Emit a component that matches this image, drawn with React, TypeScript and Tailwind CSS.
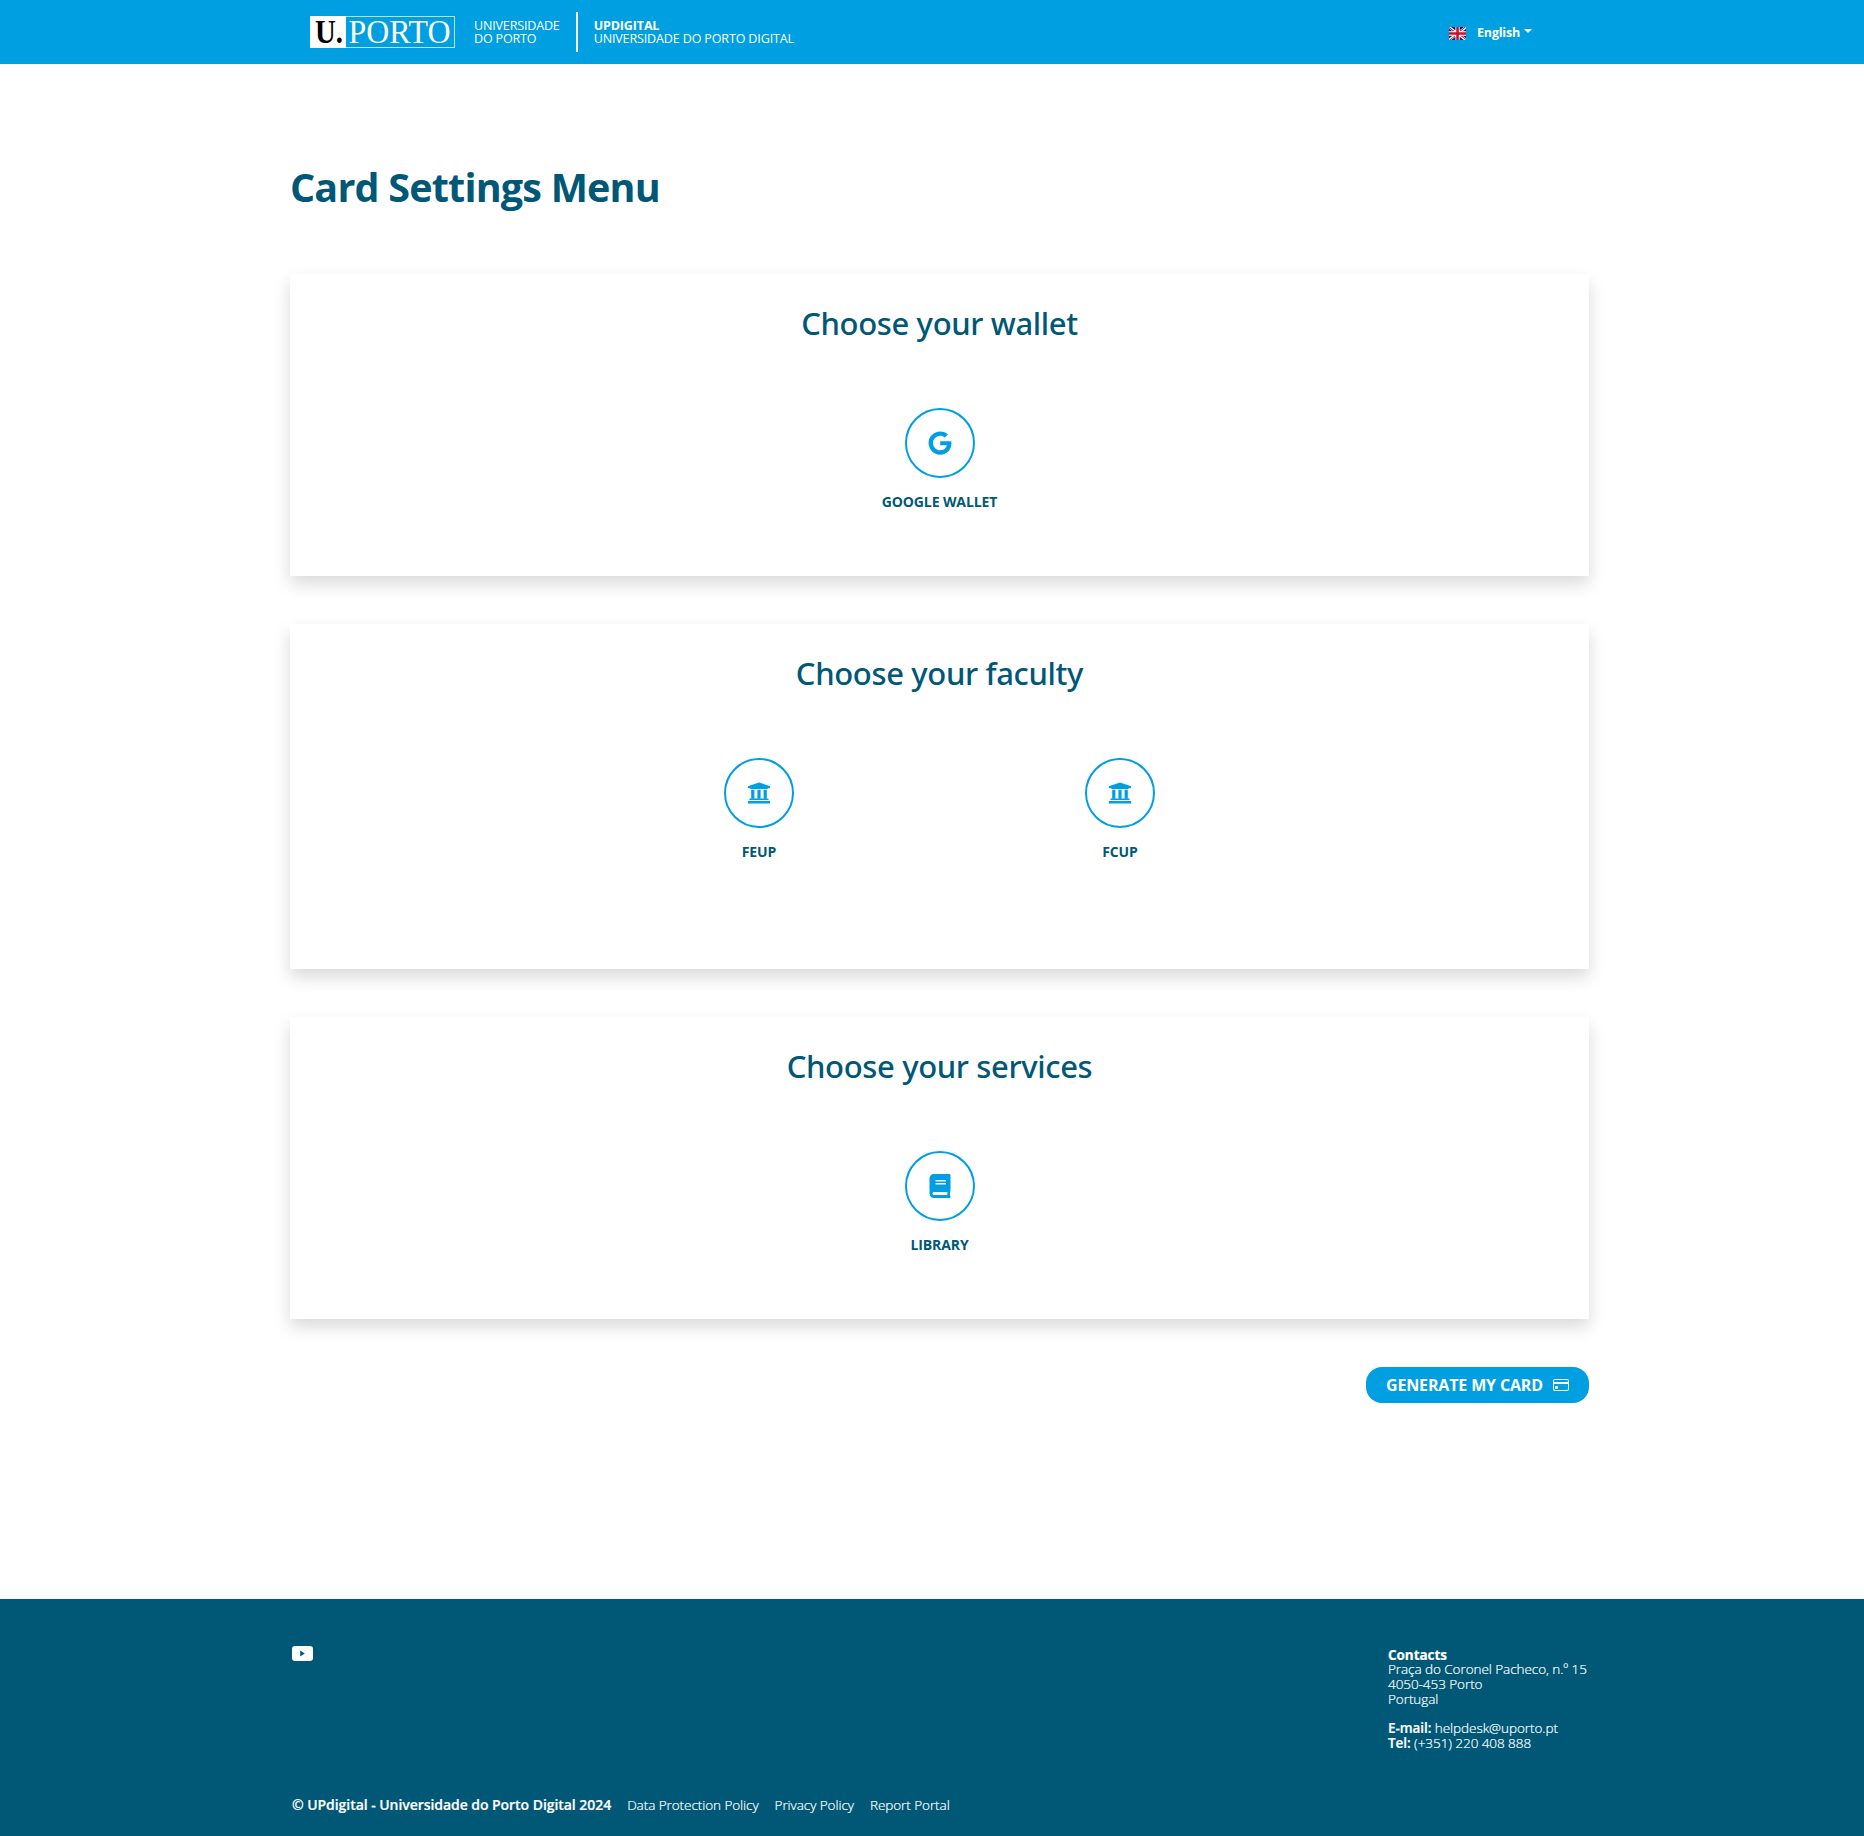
import type { ReactNode } from 'react';
import { FaGoogle, FaBook } from 'react-icons/fa';
import { BsCreditCard } from 'react-icons/bs';

function Logo() {
  return (
    <svg width="145" height="32" viewBox="0 0 145 32" className="block shrink-0 overflow-visible" aria-label="U.Porto">
      <rect x="0.5" y="0.5" width="144" height="31" fill="none" stroke="#b5e2f6" />
      <rect x="0" y="0" width="36" height="32" fill="#fff" />
      <text x="5" y="27" fontFamily="Liberation Serif, serif" fontWeight="700" fontSize="33" textLength="28" lengthAdjust="spacingAndGlyphs" fill="#000">U.</text>
      <text x="38.5" y="27" fontFamily="Liberation Serif, serif" fontSize="33" textLength="102" lengthAdjust="spacingAndGlyphs" fill="#fff">PORTO</text>
    </svg>
  );
}

function Flag() {
  return (
    <svg width="17" height="13" viewBox="0 0 640 480" preserveAspectRatio="none" className="block shrink-0">
      <path fill="#012169" d="M0 0h640v480H0z" />
      <path fill="#fff" d="m75 0 244 181L562 0h78v62L400 241l240 178v61h-80L320 301 81 480H0v-60l239-178L0 64V0z" />
      <path fill="#c8102e" d="m424 281 216 159v40L369 281zm-184 20 6 35L54 480H0zM640 0v3L391 191l2-44L590 0zM0 0l239 176h-60L0 42z" />
      <path fill="#fff" d="M241 0v480h160V0zM0 160v160h640V160z" />
      <path fill="#c8102e" d="M0 193v96h640v-96zM273 0v480h96V0z" />
    </svg>
  );
}

function Institution() {
  return (
    <svg width="24" height="22" viewBox="0 0 24 22" fill="currentColor" className="block">
      <path d="M12 .4.9 4.2v1.5c0 .3.2.5.6.5h1.6l.8.7h16.2l.8-.7h1.6c.4 0 .6-.2.6-.5V4.2z" />
      <path d="M4.2 7.7h3.2v9H4.2zM10.4 7.7h3.2v9h-3.2zM16.6 7.7h3.2v9h-3.2z" />
      <path d="M2.5 16.6h19v1.5h-19zM.9 18.9h22.2v2.6H.9z" />
    </svg>
  );
}

function Option({ icon, label }: { icon: ReactNode; label: string }) {
  return (
    <div className="flex w-[361px] flex-col items-center">
      <div className="flex size-[70px] items-center justify-center rounded-full border-2 border-[#009ee2] text-[#009ee2]">
        {icon}
      </div>
      <div className="mt-[13px] text-sm leading-[21px] font-bold tracking-[-0.1px] text-[#005876]">{label}</div>
    </div>
  );
}

function Panel({ title, height, children }: { title: string; height: string; children: ReactNode }) {
  return (
    <section className={`${height} bg-white pt-[30px] shadow-[0_8px_16px_rgba(0,0,0,0.15)]`}>
      <h2 className="text-center font-['Noto_Sans'] text-[31px] leading-[38px] font-medium tracking-[-0.35px] text-[#005876]">
        {title}
      </h2>
      <div className="mt-[66px] flex justify-center">{children}</div>
    </section>
  );
}

export default function App() {
  return (
    <div className="flex h-[1836px] flex-col bg-white font-['Open_Sans',sans-serif]">
      <header className="h-16 bg-[#009fe1] text-white">
        <div className="mx-auto flex h-full w-[1244px] items-center text-[12.5px] leading-[13px]">
          <Logo />
          <div className="ml-[19px] tracking-[-0.15px]">
            UNIVERSIDADE
            <br />
            DO PORTO
          </div>
          <div className="ml-4 h-10 w-0.5 bg-white" />
          <div className="ml-4 tracking-[-0.13px]">
            <b className="font-bold">UPDIGITAL</b>
            <br />
            UNIVERSIDADE DO PORTO DIGITAL
          </div>
          <div className="mr-[22px] ml-auto flex items-center">
            <div className="pt-[3px]">
              <Flag />
            </div>
            <span className="ml-[11px] font-bold tracking-[-0.2px]">English</span>
            <span className="-mt-0.5 ml-1 border-x-4 border-t-4 border-x-transparent border-t-white" />
          </div>
        </div>
      </header>

      <main className="ml-[290px] w-[1299px] flex-1 pt-[99px]">
        <h1 className="text-[39.5px] leading-[48px] font-bold tracking-[-0.8px] text-[#005876]">Card Settings Menu</h1>
        <div className="mt-[63px] flex flex-col gap-12">
          <Panel title="Choose your wallet" height="h-[302px]">
            <Option icon={<FaGoogle size={24} />} label="GOOGLE WALLET" />
          </Panel>
          <Panel title="Choose your faculty" height="h-[345px]">
            <Option icon={<Institution />} label="FEUP" />
            <Option icon={<Institution />} label="FCUP" />
          </Panel>
          <Panel title="Choose your services" height="h-[302px]">
            <Option icon={<FaBook size={24} />} label="LIBRARY" />
          </Panel>
        </div>
        <div className="mt-12 flex justify-end">
          <button className="flex h-9 w-[223px] items-center justify-between rounded-2xl bg-[#009fe1] px-5 font-bold tracking-[-0.15px] text-white">
            GENERATE MY CARD
            <BsCreditCard size={16} />
          </button>
        </div>
      </main>

      <footer className="h-[237px] bg-[#005876] text-white">
        <div className="ml-[290px] flex h-full w-[1299px] flex-col justify-between pt-[47px] pb-[21px]">
          <div className="flex justify-between">
            <svg width="21" height="15" viewBox="0 0 21 15" className="ml-0.5">
              <rect width="21" height="15" rx="3" fill="#fff" />
              <path d="M8.2 4.6v6l4.6-3z" fill="#005876" />
            </svg>
            <address className="w-[201px] pt-[1.6px] text-[13.5px] leading-[14.7px] font-light tracking-[-0.06px] whitespace-nowrap not-italic [-webkit-text-stroke:0.2px_white]">
              <b className="font-bold">Contacts</b>
              <br />
              Praça do Coronel Pacheco, n.º 15
              <br />
              4050-453 Porto
              <br />
              Portugal
              <br />
              <br />
              <span className="font-semibold">E-mail:</span> helpdesk@uporto.pt
              <br />
              <span className="font-semibold">Tel:</span> (+351) 220 408 888
            </address>
          </div>
          <nav className="ml-0.5 flex gap-4 text-[13.5px] leading-5 font-light tracking-[-0.06px] [-webkit-text-stroke:0.2px_white]">
            <span className="text-sm leading-5 font-semibold tracking-[-0.05px]">
              © UPdigital - Universidade do Porto Digital 2024
            </span>
            <a>Data Protection Policy</a>
            <a>Privacy Policy</a>
            <a>Report Portal</a>
          </nav>
        </div>
      </footer>
    </div>
  );
}
